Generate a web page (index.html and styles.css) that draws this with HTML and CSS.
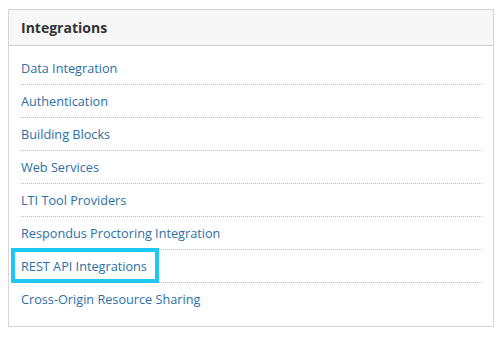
FILE: index.html
```html
<!DOCTYPE html>
<html lang="en">
<head>
    <meta charset="UTF-8">
    <meta name="viewport" content="width=device-width, initial-scale=1.0">
    <title>Integrations</title>
    <link rel="stylesheet" href="styles.css">
</head>
<body>
    <div class="panel">
        <h2 class="panel-title">Integrations</h2>
        <ul class="link-list">
            <li><a href="#">Data Integration</a></li>
            <li><a href="#">Authentication</a></li>
            <li><a href="#">Building Blocks</a></li>
            <li><a href="#">Web Services</a></li>
            <li><a href="#">LTI Tool Providers</a></li>
            <li><a href="#">Respondus Proctoring Integration</a></li>
            <li><a href="#" class="highlighted">REST API Integrations</a></li>
            <li><a href="#">Cross-Origin Resource Sharing</a></li>
        </ul>
    </div>
</body>
</html>
```

FILE: styles.css
```css
body {
    margin: 0;
    padding: 9px 10px 10px 8px;
    font-family: "Open Sans", "Liberation Sans", sans-serif;
    background-color: #ffffff;
}

.panel {
    border: 1px solid #d6d6d6;
    background-color: white;
}

.panel-title {
    margin: 0;
    padding: 0 12px;
    height: 35px;
    line-height: 35px;
    font-size: 14px;
    font-weight: 700;
    color: #333333;
    background-color: #f7f7f7;
    border-bottom: 1px solid #cfcfcf;
}

.link-list {
    list-style: none;
    margin: 0;
    padding: 6px 11px 11px 12px;
}

.link-list li {
    padding: 7px 0;
    line-height: 18px;
    font-size: 12.7px;
    border-bottom: 1px dotted #bdbdbd;
}

.link-list li:last-child {
    border-bottom: none;
}

.link-list a {
    color: #2a6fa7;
    text-decoration: none;
}

/* callout box drawn over the link */
.highlighted {
    position: relative;
    display: inline-block;
}

.highlighted::after {
    content: "";
    position: absolute;
    left: -10px;
    right: -12px;
    top: -9px;
    bottom: -8px;
    border: 4px solid #1ec8f5;
}
```
